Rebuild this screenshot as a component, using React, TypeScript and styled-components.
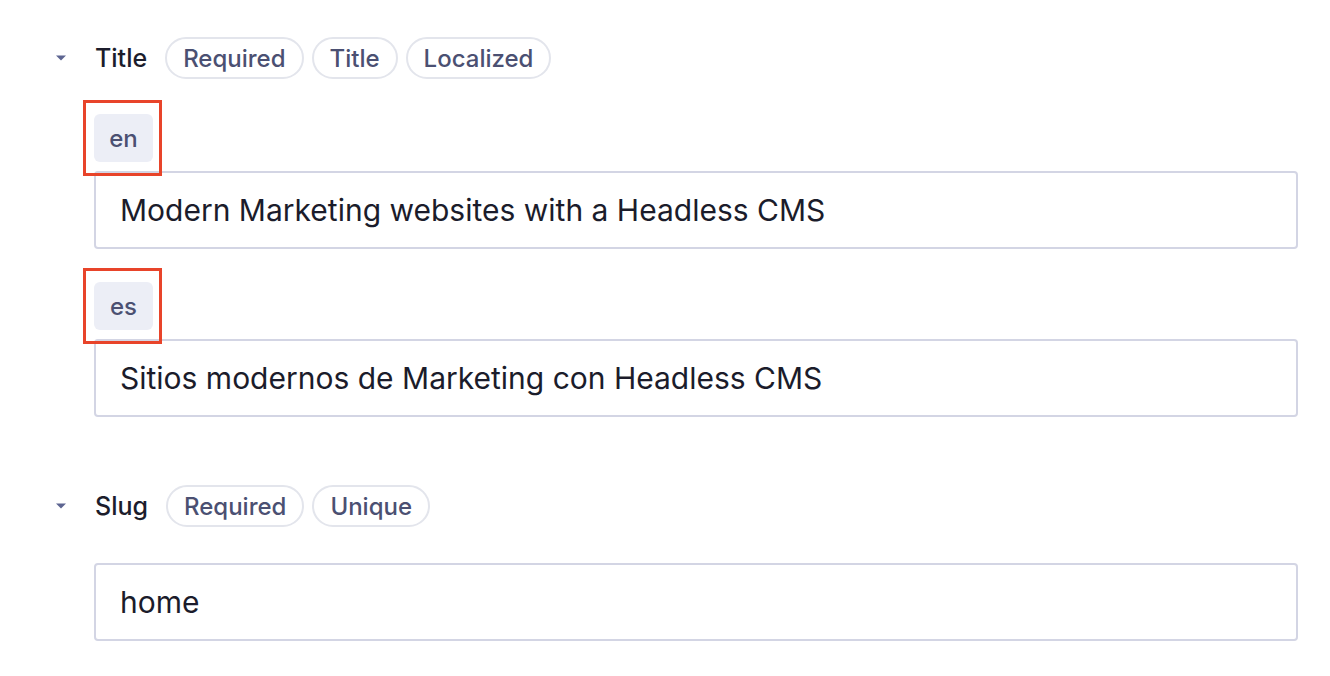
import React from "react";
import styled, { createGlobalStyle } from "styled-components";

const Global = createGlobalStyle`
  html, body { margin: 0; padding: 0; background: #ffffff; }
  body { font-family: Inter, "Noto Sans", sans-serif; -webkit-font-smoothing: antialiased; }
`;

const Page = styled.div`
  display: flex;
  flex-direction: column;
  gap: 68px;
  padding: 37px 32px 0 56px;
`;

const Section = styled.section`
  display: flex;
  flex-direction: column;
`;

const Header = styled.div`
  display: flex;
  align-items: center;
  height: 42px;
`;

const Caret = styled.svg`
  width: 10px;
  height: 6px;
  margin-right: 29px;
  flex: none;
`;

const Label = styled.span`
  font-size: 25px;
  font-weight: 500;
  color: #1c1d2c;
  margin-right: 18px;
`;

const Pills = styled.div`
  display: flex;
  gap: 8px;
`;

const Pill = styled.span`
  display: inline-flex;
  align-items: center;
  height: 42px;
  box-sizing: border-box;
  padding: 0 16px;
  border: 2px solid #e3e5ec;
  border-radius: 21px;
  font-size: 24px;
  font-weight: 450;
  color: #4b5072;
`;

const Body = styled.div<{ $top: number }>`
  display: flex;
  flex-direction: column;
  margin-left: 38px;
  margin-top: ${(p) => p.$top}px;
  gap: 33px;
`;

const Locale = styled.div`
  display: flex;
  flex-direction: column;
  align-items: flex-start;
  gap: 9px;
`;

const ChipWrap = styled.div`
  position: relative;
  display: inline-flex;
`;

const Chip = styled.span`
  display: inline-flex;
  align-items: center;
  justify-content: center;
  width: 59px;
  height: 48px;
  border-radius: 6px;
  background: #eceef6;
  font-size: 24px;
  font-weight: 450;
  color: #4b5072;
`;

const Highlight = styled.span`
  position: absolute;
  top: -14px;
  left: -11px;
  right: -9px;
  bottom: -14px;
  border: 3px solid #e8442a;
  pointer-events: none;
`;

const Input = styled.div`
  align-self: stretch;
  box-sizing: border-box;
  height: 78px;
  display: flex;
  align-items: center;
  padding: 0 24px;
  border: 2px solid #d3d5e4;
  border-radius: 4px;
  font-size: 30px;
  color: #1b1c2b;
`;

const CaretIcon = () => (
  <Caret viewBox="0 0 10 6">
    <path d="M0 0.5 L10 0.5 L5 5.5 Z" fill="#5d6591" />
  </Caret>
);

const FieldHeader = ({ label, tags }: { label: string; tags: string[] }) => (
  <Header>
    <CaretIcon />
    <Label>{label}</Label>
    <Pills>
      {tags.map((t) => (
        <Pill key={t}>{t}</Pill>
      ))}
    </Pills>
  </Header>
);

export default function App() {
  return (
    <>
      <Global />
      <Page>
        <Section>
          <FieldHeader label="Title" tags={["Required", "Title", "Localized"]} />
          <Body $top={35}>
            <Locale>
              <ChipWrap>
                <Chip>en</Chip>
                <Highlight />
              </ChipWrap>
              <Input>Modern Marketing websites with a Headless CMS</Input>
            </Locale>
            <Locale>
              <ChipWrap>
                <Chip>es</Chip>
                <Highlight />
              </ChipWrap>
              <Input>Sitios modernos de Marketing con Headless CMS</Input>
            </Locale>
          </Body>
        </Section>
        <Section>
          <FieldHeader label="Slug" tags={["Required", "Unique"]} />
          <Body $top={36}>
            <Input>home</Input>
          </Body>
        </Section>
      </Page>
    </>
  );
}
